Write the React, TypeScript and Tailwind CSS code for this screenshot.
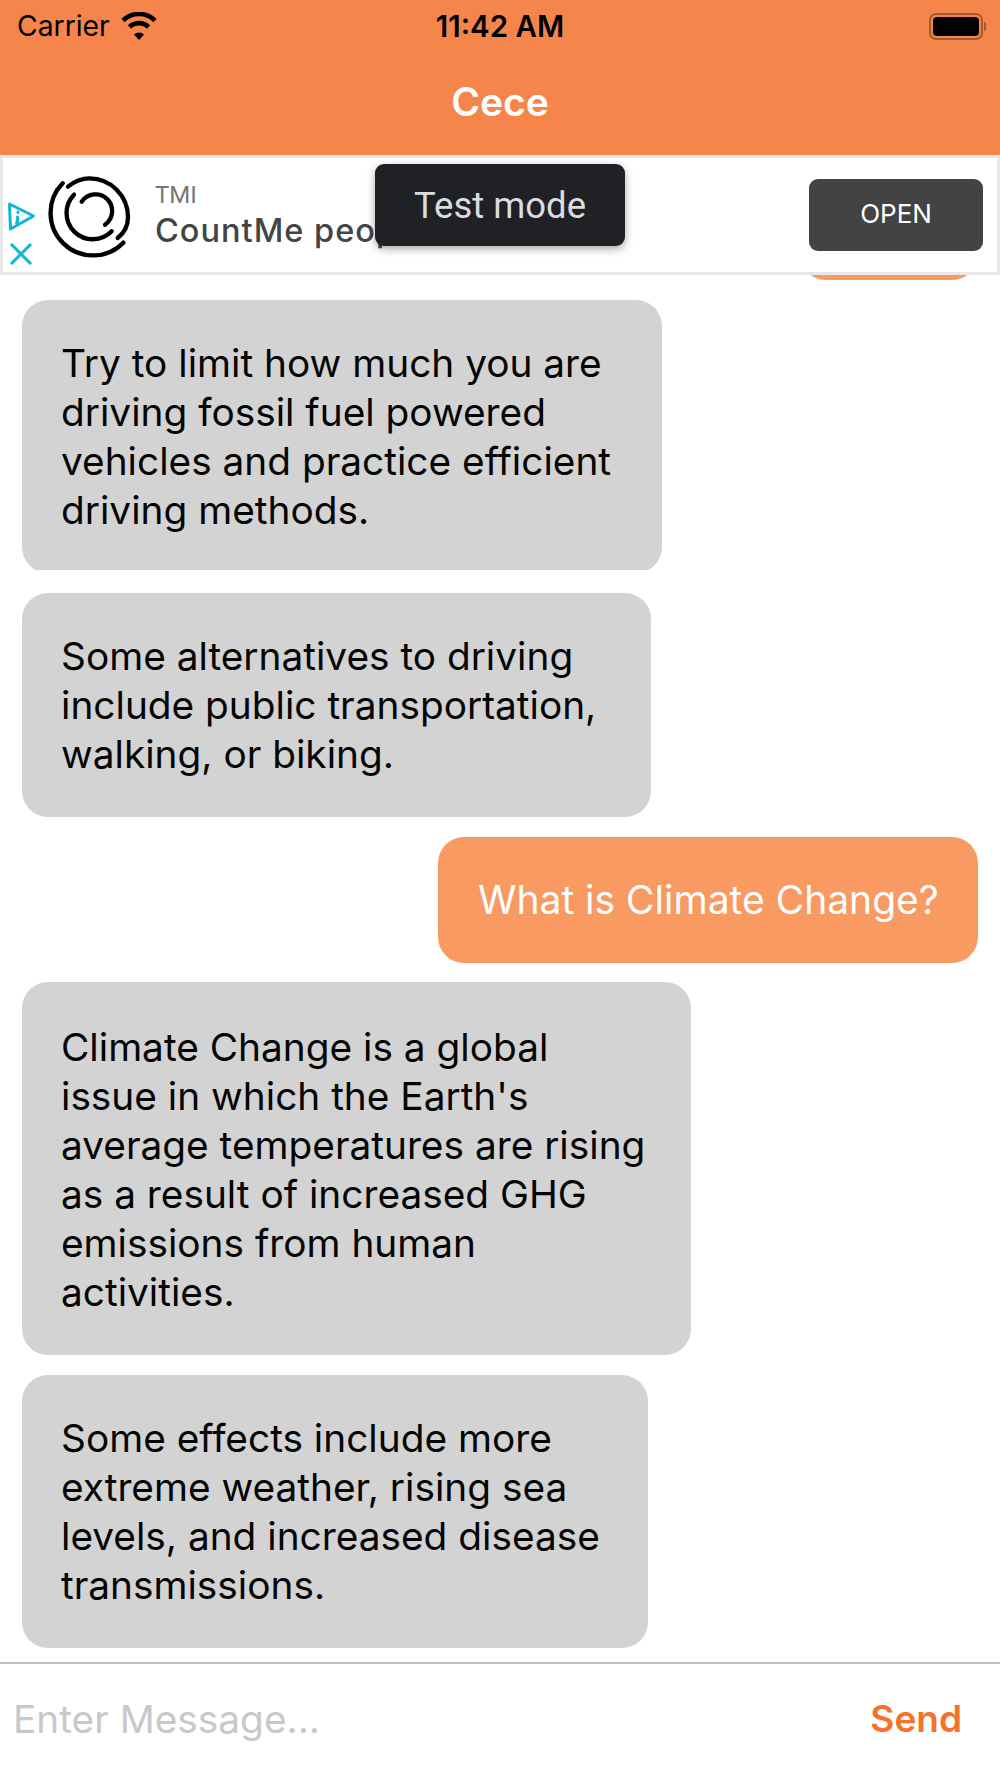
const sans = "font-['Inter','Liberation_Sans',sans-serif]";

function Wifi() {
  return (
    <svg width="38" height="28" viewBox="0 0 36 28" className="ml-[10px]" fill="none" stroke="#000" strokeWidth="4.6">
      <path d="M2 8.5 A23 23 0 0 1 34 8.5" />
      <path d="M8.5 15 A13.5 13.5 0 0 1 27.5 15" />
      <path d="M13 22.5 L18 28 L23 22.5 A7 7 0 0 0 13 22.5 Z" fill="#000" stroke="none" />
    </svg>
  );
}

function Battery() {
  return (
    <div className="flex items-center">
      <div className="flex h-[27px] w-[54px] items-center justify-center rounded-[7px] border-2 border-[#a35a2e]">
        <div className="h-[19px] w-[46px] rounded-[4px] bg-black" />
      </div>
      <div className="ml-[1px] h-[9px] w-[2px] rounded-r-full bg-[#a35a2e]" />
    </div>
  );
}

function AdLogo() {
  return (
    <svg width="84" height="84" viewBox="0 0 252 252" fill="none" stroke="#000" strokeWidth="13" strokeLinecap="round">
      <path d="M44 25 A120 120 0 1 0 226 203" />
      <path d="M60 35 Q90 10 124 10 A116 116 0 0 1 240 126 Q240 165 209 189" />
      <path d="M78 59 A74 74 0 1 0 191 169" />
      <path d="M101 80 A50 50 0 1 1 171 149" />
    </svg>
  );
}

function AdChoices() {
  return (
    <div className="flex w-[32px] flex-col items-start gap-[11px] self-end pb-[7px] pl-[4px]">
      <svg width="29" height="30" viewBox="0 0 28 30" fill="none" stroke="#11b5d6" strokeWidth="3" strokeLinejoin="round" strokeLinecap="round">
        <path d="M2 2 L26 14 L3 27 Z" />
        <path d="M10 15 Q11 19 9 21" />
        <path d="M10.5 10 V10.5" />
      </svg>
      <svg width="24" height="22" viewBox="0 0 24 22" fill="none" stroke="#11b5d6" strokeWidth="3" className="ml-[2px]">
        <path d="M2 1 L22 21 M22 1 L2 21" />
      </svg>
    </div>
  );
}

function Them({ w, lines, className = "" }: { w: string; lines: string[]; className?: string }) {
  return (
    <div className={`rounded-[26px] bg-[#d3d3d3] pb-[39px] pl-[39px] text-[38.8px] leading-[49px] text-[#050505] ${w} ${className}`}>
      {lines.map((l) => (
        <div key={l} className="whitespace-nowrap">{l}</div>
      ))}
    </div>
  );
}

export default function App() {
  return (
    <div className={`relative flex h-[1778px] w-[1000px] flex-col overflow-hidden bg-white ${sans}`}>
      <header className="h-[155px] shrink-0 bg-[#f5854a]">
        <div className="relative flex h-[52px] items-center justify-between pr-[14px] pl-[17px]">
          <div className="flex items-center text-[28.3px] text-black">
            <span>Carrier</span>
            <Wifi />
          </div>
          <span className="absolute left-0 w-full text-center text-[29.5px] font-semibold text-black">11:42 AM</span>
          <Battery />
        </div>
        <div className="mt-[2px] text-center text-[39px] leading-[96px] font-semibold text-white">Cece</div>
      </header>

      <div className="relative flex h-[120px] shrink-0 items-center border-[3px] border-[#e8e8e8] bg-white">
        <AdChoices />
        <div className="mt-[4px] ml-[13px]"><AdLogo /></div>
        <div className="ml-[23px] flex h-full flex-col justify-center pt-[1px]">
          <div className="mb-[2px] font-['Roboto',sans-serif] text-[24px] leading-[28px] text-[#777]">TMI</div>
          <div className="text-[32.5px] leading-[40px] font-medium tracking-[1px] whitespace-nowrap text-[#444]">CountMe people</div>
        </div>
        <button className="absolute top-[21px] right-[14px] h-[72px] w-[174px] rounded-[9px] bg-[#434343] pb-[4px] text-[26px] text-white">OPEN</button>
        <div className="absolute top-[6px] left-[372px] flex h-[82px] w-[250px] items-center justify-center rounded-[9px] bg-[#202124] pt-[3px] font-['Roboto',sans-serif] text-[36.5px] text-[#dadce0] shadow-[0_3px_8px_rgba(0,0,0,0.35)]">Test mode</div>
      </div>

      <main className="flex flex-1 flex-col overflow-hidden px-[22px]">
        <div className="flex h-[5px] shrink-0 items-end justify-end overflow-hidden">
          <div className="h-[60px] w-[178px] shrink-0 rounded-[26px] bg-[#f99a63]" />
        </div>
        <div className="mt-[20px] h-[270px] shrink-0 overflow-hidden">
          <Them w="w-[640px] pt-[38px]" lines={["Try to limit how much you are", "driving fossil fuel powered", "vehicles and practice efficient", "driving methods."]} />
        </div>
        <Them w="mt-[23px] w-[629px] pt-[38px]" lines={["Some alternatives to driving", "include public transportation,", "walking, or biking."]} />
        <div className="mt-[20px] flex h-[126px] w-[540px] shrink-0 items-center self-end rounded-[26px] bg-[#f99a63] pl-[40px] text-[39px] whitespace-nowrap text-white">What is Climate Change?</div>
        <Them w="mt-[19px] w-[669px] pt-[40px]" lines={["Climate Change is a global", "issue in which the Earth's", "average temperatures are rising", "as a result of increased GHG", "emissions from human", "activities."]} />
        <Them w="mt-[20px] w-[626px] pt-[38px]" lines={["Some effects include more", "extreme weather, rising sea", "levels, and increased disease", "transmissions."]} />
      </main>

      <footer className="flex h-[116px] shrink-0 items-start justify-between border-t-2 border-[#bdbdbd] pt-[30px] pr-[38px] pl-[13px]">
        <span className="text-[38.8px] leading-[50px] text-[#c8c8c8]">Enter Message...</span>
        <span className="text-[37px] leading-[50px] font-semibold text-[#f4722b]">Send</span>
      </footer>
    </div>
  );
}
